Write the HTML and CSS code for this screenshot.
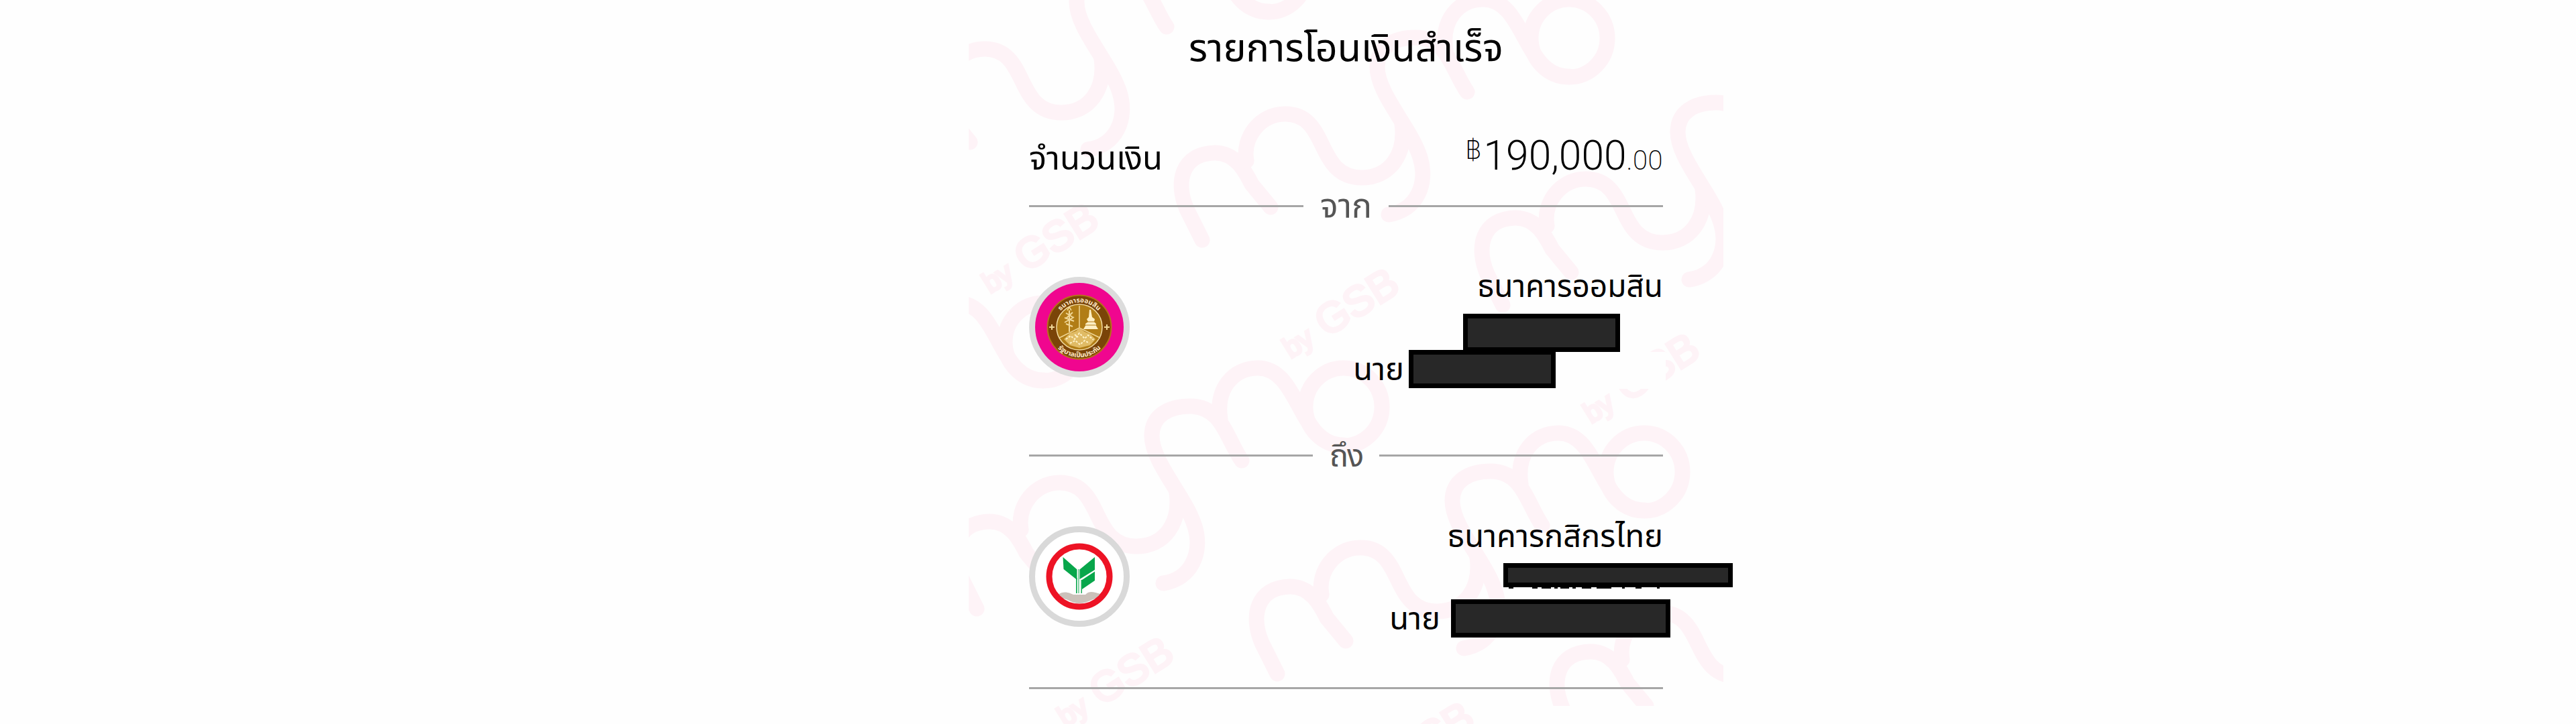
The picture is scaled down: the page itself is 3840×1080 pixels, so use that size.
FILE: index.html
```html
<!DOCTYPE html>
<html lang="th">
<head>
    <meta charset="UTF-8">
    <meta name="viewport" content="width=device-width, initial-scale=1.0">
    <title>รายการโอนเงินสำเร็จ</title>
    <link rel="stylesheet" href="styles.css">
</head>
<body>
    <div class="receipt">
        <!-- repeated mymo by GSB watermark -->
        <svg class="watermark" viewBox="1444 0 1125 1080" aria-hidden="true">
            <defs>
                <clipPath id="page"><rect x="1444" y="0" width="1125" height="1053"/></clipPath>
                <g id="mymo">
                    <path d="M1792 358 L1769 312 C1752 272 1761 229 1811 228 C1842 228 1856 255 1866 275 L1894 309"/>
                    <path d="M1858 240 C1852 205 1878 170 1916 170 C1982 170 1960 265 2030 265 C2072 265 2096 230 2090 185"/>
                    <path d="M2070 320 C2112 314 2129 274 2117 235 C2103 190 2053 140 2053 100 C2053 70 2078 56 2110 56 C2158 56 2164 104 2187 137"/>
                    <path d="M2155 75 C2148 30 2174 -1 2211 -1 C2274 -1 2270 114 2339 114"/>
                    <ellipse cx="2339" cy="57" rx="57" ry="58"/>
                </g>
                <g id="bygsb">
                    <text class="wm-by" transform="translate(1476 438) rotate(-32)">by</text>
                    <text class="wm-gsb" transform="translate(1529 407) rotate(-32)">GSB</text>
                </g>
            </defs>
            <g class="wm-lines" clip-path="url(#page)">
                <use href="#mymo"/>
                <use href="#mymo" x="-448" y="-97"/>
                <use href="#mymo" x="448" y="97"/>
                <use href="#mymo" x="-784" y="453"/>
                <use href="#mymo" x="-336" y="550"/>
                <use href="#mymo" x="112" y="647"/>
                <use href="#mymo" x="560" y="744"/>
            </g>
            <g class="wm-text">
                <use href="#bygsb"/>
                <use href="#bygsb" x="448" y="97"/>
                <use href="#bygsb" x="896" y="194"/>
                <use href="#bygsb" x="112" y="647"/>
                <use href="#bygsb" x="560" y="744"/>
            </g>
            <rect class="wm-blank" x="2319" y="525" width="164" height="55"/>
        </svg>

        <div class="content">
            <h1 class="title">รายการโอนเงินสำเร็จ</h1>

            <div class="amount-row">
                <span class="amount-label">จำนวนเงิน</span>
                <span class="amount"><span class="baht">฿</span><span class="whole">190,000</span><span class="cents">.00</span></span>
            </div>

            <div class="divider"><span class="divider-text">จาก</span></div>

            <div class="account">
                <svg class="logo" viewBox="0 0 150 150">
                    <circle cx="75" cy="75" r="75" fill="#dcdcdc"/>
                    <circle cx="75" cy="75" r="66" fill="#f0068f"/>
                    <circle cx="75" cy="75" r="47.5" fill="#7a4408" stroke="#b5731a" stroke-width="2"/>
                    <circle cx="75" cy="75" r="34" fill="#b17d16" stroke="#f3dca2" stroke-width="1.5"/>
                    <path id="seal-top" fill="none" d="M38 75 A37 37 0 0 1 112 75"/>
                    <path id="seal-bottom" fill="none" d="M30 75 A45 45 0 0 0 120 75"/>
                    <text class="seal-text"><textPath href="#seal-top" startOffset="50%">ธนาคารออมสิน</textPath></text>
                    <text class="seal-text"><textPath href="#seal-bottom" startOffset="50%">รัฐบาลเป็นประกัน</textPath></text>
                    <g stroke="#f0d797" stroke-width="2" fill="none">
                        <path d="M30 75h8M34 71v8M112 75h8M116 71v8"/>
                        <path d="M75 43v34" stroke-width="1.5"/>
                        <path d="M45 91 L75 76 L106 91" stroke-width="1.5"/>
                        <path d="M60 50v32M55 54l10 6M65 53l-10 9M53 61l14 5M67 60l-14 8M55 70l10 4"/>
                        <path d="M57 50l3-5 3 5" stroke-width="1.5"/>
                    </g>
                    <path d="M90 49l2 0 2 11 4 3-1 4 3 3v3l3 5H81l3-5v-3l4-3-2-4 3-3z" fill="#fff0c5"/>
                    <path d="M83 67h16M82 72h19" stroke="#b17d16" stroke-width="1"/>
                    <path d="M52 93 L61 84 70 81 75 76 83 82 91 85 99 93 91 102 75 106 61 102z" fill="#e0bb65"/>
                    <path d="M55 93l7-5 6 5 7-9 8 8 5-5 8 7M61 99l8-4 7 6 7-6 7 4M68 86l5 4" stroke="#fff2c8" stroke-width="2" stroke-dasharray="3 2" fill="none"/>
                </svg>
                <div class="details">
                    <div class="bank bank-from">ธนาคารออมสิน</div>
                    <div class="mask mask-from-number"></div>
                    <div class="name-row name-from"><span class="prefix">นาย</span><div class="mask mask-from-name"></div></div>
                </div>
            </div>

            <div class="divider divider-to"><span class="divider-text">ถึง</span></div>

            <div class="account account-to">
                <svg class="logo" viewBox="0 0 150 150">
                    <circle cx="75" cy="75" r="70.5" fill="#fff" stroke="#d9d9d9" stroke-width="9"/>
                    <path d="M43 102 C52 95 62 100 66 102 L84 102 C91 95 97 99 107 101 L103 108 C94 107 88 115 75 115 C62 115 58 107 47 108Z" fill="#cbc1ba"/>
                    <circle cx="75" cy="75" r="45" fill="none" stroke="#ed1325" stroke-width="9"/>
                    <g fill="#08a64b">
                        <path d="M50.5 46 L71.5 64.5 V80 L51.5 64Z"/>
                        <path d="M98 46 L75.5 64.5 V79 L98 65Z"/>
                        <path d="M98 67.500 L79 80 V94 L98 81Z"/>
                        <path d="M70 77h1.600v23h-1.600zM73.500 64h1v36h-1zM77.500 80h1.400v20h-1.400z"/>
                    </g>
                </svg>
                <div class="details">
                    <div class="bank bank-to">ธนาคารกสิกรไทย</div>
                    <div class="mask mask-to-number">
                        <svg class="remnant" viewBox="0 0 230 2"><path d="M1 1h7M36 1h8M50 1h14M69 1h5M78 1h13M96 1h5M110 1h14M132 1h22M170 1h4M190 1h9M222 1h4"/></svg>
                    </div>
                    <div class="name-row name-to"><span class="prefix">นาย</span><div class="mask mask-to-name"></div></div>
                </div>
            </div>
            <div class="end-line"></div>
        </div>
    </div>
</body>
</html>
```
FILE: styles.css
```css
body {
    margin: 0;
    background-color: #fefefe;
    font-family: "Liberation Sans", "Noto Sans Thai", sans-serif;
    color: #000;
    overflow: hidden;
}
.receipt {
    position: relative;
    width: 1125px;
    height: 1080px;
    margin-left: 1444px;
}
/* watermark lies behind the receipt */
.watermark {
    position: absolute;
    top: 0;
    left: 0;
    width: 1125px;
    height: 1080px;
}
.wm-lines {
    fill: none;
    stroke: #fef3f7;
    stroke-width: 23;
    stroke-linecap: round;
    stroke-linejoin: round;
}
.wm-text {
    fill: #fef3f7;
    stroke: #fef3f7;
    stroke-width: 4;
}
.wm-by {
    font-size: 42px;
}
.wm-gsb {
    font-size: 63px;
}
.wm-blank {
    fill: #fefefe;
}
.content {
    position: relative;
    width: 945px;
    margin: 0 auto;
}
.title {
    height: 140px;
    margin: 0;
    font-size: 57.5px;
    font-weight: normal;
    line-height: 142px;
    text-align: center;
}
.amount-row {
    display: flex;
    justify-content: space-between;
    align-items: baseline;
    height: 137px;
    line-height: 186px;
}
.amount-label {
    font-size: 49px;
}
.amount {
    font-family: Roboto, sans-serif;
    font-weight: 300;
}
.baht {
    font-family: Inter, Roboto, sans-serif;
    font-size: 38px;
    font-weight: 200;
    vertical-align: 16px;
    line-height: 1;
    margin-right: 3px;
}
.whole {
    font-size: 60.5px;
}
.cents {
    font-size: 40px;
    font-weight: 200;
    letter-spacing: 0.5px;
}
.divider {
    display: flex;
    align-items: center;
    gap: 25px;
    height: 61px;
    color: #555;
}
.divider::before,
.divider::after {
    content: "";
    flex: 1;
    height: 3px;
    background-color: #a6a6a6;
}
.divider-text {
    font-size: 50px;
    line-height: 61px;
}
.divider-to .divider-text {
    font-size: 47px;
    letter-spacing: -2px;
}
.account {
    display: flex;
    justify-content: space-between;
    align-items: flex-start;
    height: 311px;
}
.account-to {
    height: 315px;
}
.logo {
    width: 150px;
    height: 150px;
    margin-top: 75px;
}
.details {
    display: flex;
    flex-direction: column;
    align-items: flex-end;
}
.bank {
    height: 130px;
    line-height: 179px;
}
.bank-from {
    font-size: 46px;
}
.bank-to {
    font-size: 47px;
}
.mask {
    box-sizing: border-box;
    border: 7px solid #000;
    background-color: #282828;
}
.mask-from-number {
    width: 234px;
    height: 57px;
    margin-right: 64px;
}
.mask-from-name {
    width: 219px;
    height: 57px;
}
.mask-to-number {
    width: 342px;
    height: 36px;
    margin-right: -104px;
}
.mask-to-name {
    width: 327px;
    height: 57px;
}
.remnant {
    display: block;
    width: 230px;
    height: 2px;
    margin-top: 29px;
    stroke: #000;
    stroke-width: 2;
}
.name-row {
    display: flex;
    align-items: center;
    height: 57px;
}
.name-from {
    gap: 7px;
    margin-top: -3px;
    margin-right: 160px;
}
.name-to {
    gap: 16px;
    margin-top: 18px;
    margin-right: -11px;
}
.prefix {
    font-size: 47px;
    line-height: 58px;
}
.seal-text {
    font-size: 10px;
    font-weight: bold;
    fill: #ffe9c9;
    text-anchor: middle;
}
.end-line {
    height: 3px;
    background-color: #a6a6a6;
}
```
